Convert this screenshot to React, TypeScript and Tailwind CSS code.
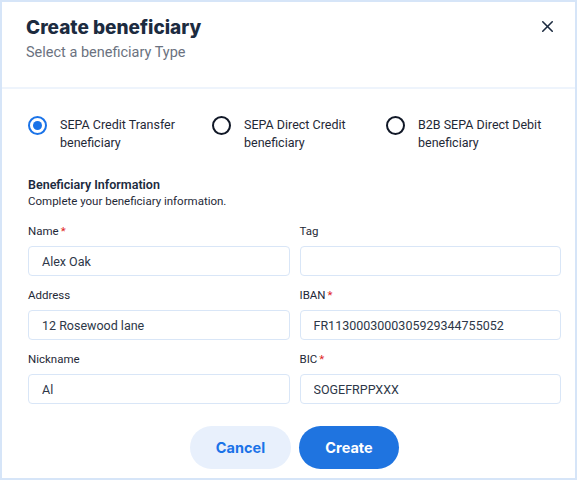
import { X } from "lucide-react";

const roboto = { fontFamily: "Roboto, 'Liberation Sans', sans-serif" };

function Radio({ checked, label, width }: { checked?: boolean; label: string; width: string }) {
    return (
        <label className={`flex items-start gap-[13px] ${width}`}>
            {checked ? (
                <span className="flex h-[19px] w-[19px] shrink-0 items-center justify-center rounded-full border-[2.5px] border-[#1a73e8]">
                    <span className="h-[9px] w-[9px] rounded-full bg-[#1a73e8]" />
                </span>
            ) : (
                <span className="h-[19px] w-[19px] shrink-0 rounded-full border-[2.5px] border-[#111827]" />
            )}
            <span className="text-[12.5px] leading-[18px] text-[#1f2937]">{label}</span>
        </label>
    );
}

function Field({ label, value, required }: { label: string; value?: string; required?: boolean }) {
    return (
        <div className="flex flex-col gap-[7px]">
            <div className="text-[11.5px] leading-[16px] text-[#1f2937]">
                {label}
                {required && <span className="ml-[2px] text-[#e02424]">*</span>}
            </div>
            <input
                readOnly
                value={value ?? ""}
                className="h-[30px] w-full rounded-[4px] border border-[#d9e6f7] bg-white px-[13px] text-[12.5px] text-[#2d3748] outline-none"
                style={roboto}
            />
        </div>
    );
}

export default function App() {
    return (
        <div className="flex h-[480px] w-[577px] flex-col border-2 border-[#d6e5f8] bg-white" style={roboto}>
            {/* Header */}
            <div className="relative h-[87px] border-b-2 border-[#eef4fc] pl-[24px] pt-[12px]">
                <h1
                    className="text-[19px] font-extrabold leading-[28px] text-[#1c2b40]"
                    style={{ fontFamily: "Inter, 'Liberation Sans', sans-serif" }}
                >
                    Create beneficiary
                </h1>
                <p className="mt-[1px] text-[14.5px] leading-[20px] text-[#6b7280]">Select a beneficiary Type</p>
                <button className="absolute right-[18px] top-[15px] text-[#1c2b40]">
                    <X className="h-[19px] w-[19px]" strokeWidth={2} />
                </button>
            </div>

            {/* Body */}
            <div className="flex flex-col pl-[26px] pr-[14px] pt-[27px]">
                <div className="flex">
                    <Radio checked label="SEPA Credit Transfer beneficiary" width="w-[184px]" />
                    <Radio label="SEPA Direct Credit beneficiary" width="w-[174px]" />
                    <Radio label="B2B SEPA Direct Debit beneficiary" width="flex-1" />
                </div>

                <div className="mt-[25px] text-[12.5px] font-semibold leading-[16px] text-[#1c2b40]">
                    Beneficiary Information
                </div>
                <div className="text-[11.5px] leading-[16px] text-[#1f2937]">Complete your beneficiary information.</div>

                <div className="mt-[14px] grid grid-cols-2 gap-x-[10px] gap-y-[11px]">
                    <Field label="Name" value="Alex Oak" required />
                    <Field label="Tag" />
                    <Field label="Address" value="12 Rosewood lane" />
                    <Field label="IBAN" value="FR1130003000305929344755052" required />
                    <Field label="Nickname" value="Al" />
                    <Field label="BIC" value="SOGEFRPPXXX" required />
                </div>

                <div
                    className="mt-[22px] flex justify-center gap-[8px]"
                    style={{ fontFamily: "Inter, 'Liberation Sans', sans-serif" }}
                >
                    <button className="h-[43px] w-[101px] rounded-full bg-[#e8f0fc] text-[14.5px] font-bold text-[#1a73e8]">
                        Cancel
                    </button>
                    <button className="h-[43px] w-[100px] rounded-full bg-[#1f74e0] text-[14.5px] font-bold text-white">
                        Create
                    </button>
                </div>
            </div>
        </div>
    );
}
